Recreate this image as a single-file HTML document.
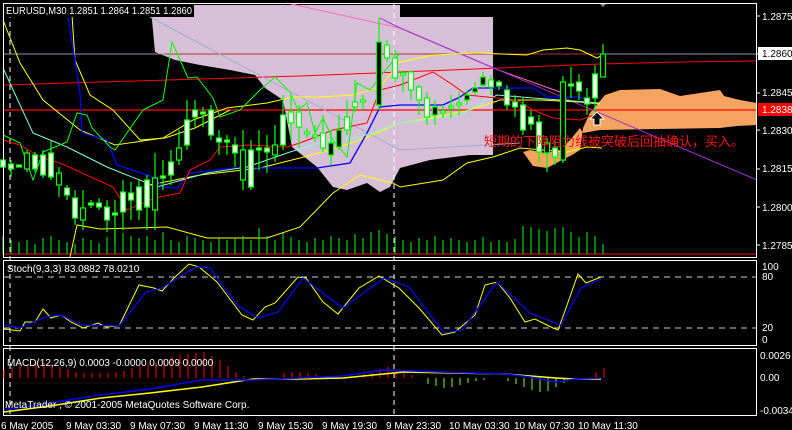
<!DOCTYPE html>
<html><head><meta charset="utf-8"><style>
html,body{margin:0;padding:0;background:#000;width:792px;height:430px;overflow:hidden}
svg{display:block}
text{font-family:"Liberation Sans","Noto Sans CJK SC",sans-serif;font-size:10px;fill:#fff}
</style></head><body>
<svg width="792" height="430" viewBox="0 0 792 430" xmlns="http://www.w3.org/2000/svg">
<rect width="792" height="430" fill="#000"/>
<polygon fill="#d8bfd8" points="150,5 400,5 400,17 493,17 493,155 470,155 430,160 400,168 390,187 380,192 367,183 347,190 333,187 317,167 292,147 283,100 265,88 255,75 230,70 200,65 175,60 155,52 152,20"/>
<polygon fill="#f4a460" points="523,152 533,166 547,168 560,161 572,155 580,150 583,128 590,113 605,95 620,90 660,89 680,96 700,93 720,90 724,96 740,100 757,103 757,125 737,126 720,128 600,130 583,133 580,128 570,140 560,150 545,153 530,150"/>
<line x1="3" y1="54" x2="757" y2="54" stroke="#8898a8" stroke-width="1"/>
<line x1="165" y1="54" x2="600" y2="54" stroke="#b03030" stroke-width="1"/>
<line x1="3" y1="110" x2="757" y2="110" stroke="#ff0000" stroke-width="1.3"/>
<polyline fill="none" stroke="#ff0000" points="3,85 100,82 200,79 300,76 400,72 500,68 600,64 680,62 757,61"/>
<line x1="3" y1="254" x2="757" y2="254" stroke="#ff0000"/>
<line x1="10" y1="4" x2="10" y2="415" stroke="#fff" stroke-dasharray="5,4"/>
<line x1="394" y1="4" x2="394" y2="415" stroke="#fff" stroke-dasharray="5,4"/>
<polyline fill="none" stroke="#9ab0c8" points="150,17 400,150 520,143"/>
<polyline fill="none" stroke="#ff69b4" points="287,3 400,28 493,68 560,92"/>
<polyline fill="none" stroke="#9b30d0" points="380,18 400,28 757,180"/>
<polyline fill="none" stroke="#ffff00" points="3,20 20,63 43,100 80,130 115,145 163,138 193,120 227,108 267,103 293,97 320,97 353,95 380,87 400,62 433,55 477,53 527,55 543,50 567,48 580,50 597,58 602,55"/>
<polyline fill="none" stroke="#ffff00" points="72,15 75,60 90,95 113,110 140,140 165,138 195,128 230,110"/>
<polyline fill="none" stroke="#ffff00" points="70,257 77,225 100,229 167,227 207,238 267,238 300,227 333,193 360,175 393,183 400,187 443,180 467,163 493,157 520,148 567,152 587,147 602,148"/>
<polyline fill="none" stroke="#ffff00" points="150,185 200,175 260,168 300,158 330,150 360,140 400,123 430,118 470,110 500,100 540,100 580,102 600,104"/>
<polyline fill="none" stroke="#0000ff" stroke-width="1.3" points="67,10 80,93 82,133 107,140 117,165 153,177 163,187 177,188 190,173 233,168 317,168 350,163 367,133 380,107 400,105 443,105 460,97 473,88 533,88 547,97 580,97 590,100"/>
<polyline fill="none" stroke="#7fffd4" points="3,68 33,133 67,147 107,167 157,187 207,173 247,167 290,152 320,143 360,137 400,123 460,115 497,95 533,98 600,103"/>
<polyline fill="none" stroke="#ff0000" points="3,140 20,145 40,157 60,163 113,187 127,210 150,200 160,197 180,193 190,170 210,160 220,147 250,145 287,147 300,143 333,130 367,123 380,90 400,85 433,72 450,83 467,95 487,97 517,100 533,110 553,118 580,120 600,113"/>
<polyline fill="none" stroke="#00ff00" points="3,135 20,143 33,180 43,152 67,142 77,113 87,115 92,128 110,147 115,150 143,110 163,100 172,42 180,60 188,78 197,77 213,98 220,117 240,110 260,90 275,77 290,92 298,110 307,103 315,133 323,118 333,140 347,157 357,83 370,90 383,73 400,53"/>
<g stroke="#00ff00">
<path d="M3 254V236M11 254V240M19 254V242M27 254V240M35 254V244M43 254V238M51 254V236M59 254V240M67 254V242M75 254V244M83 254V238M91 254V240M99 254V243M107 254V237M115 254V234M123 254V233M131 254V236M139 254V238M147 254V236M155 254V240M163 254V232M171 254V240M179 254V242M187 254V236M195 254V238M203 254V240M211 254V242M219 254V237M227 254V240M235 254V238M243 254V236M251 254V240M259 254V228M267 254V236M275 254V240M283 254V233M291 254V237M299 254V240M307 254V242M315 254V238M323 254V240M331 254V236M339 254V238M347 254V240M355 254V234M363 254V238M371 254V232M379 254V230M387 254V234M395 254V236M403 254V240M411 254V242M419 254V238M427 254V240M435 254V236M443 254V240M451 254V238M459 254V240M467 254V242M475 254V240M483 254V237M491 254V242M499 254V240M507 254V242M515 254V239M523 254V226M531 254V227M539 254V229M547 254V231M555 254V228M563 254V227M571 254V232M579 254V237M587 254V232M595 254V236M603 254V244"/>
</g>
<g stroke="#00ff00" stroke-width="1.2">
<path d="M11 160V177M27 150V172M35 152V172M43 150V178M51 141V180M59 167V197M67 185V200M75 190V225M83 190V230M91 200V208M99 198V210M107 200V232M115 200V245M123 180V230M131 182V220M139 180V220M147 175V230M155 153V230M163 160V190M171 150V185M179 130V165M187 100V150M195 100V127M203 107V127M211 105V140M219 130V155M227 135V155M235 137V167M243 130V190M251 140V190M259 130V170M267 135V173M275 125V162M283 95V150M291 95V140M299 105V148M307 128V138M315 125V142M323 115V152M331 130V165M339 115V150M347 100V135M355 80V112M363 95V110M379 18V110M387 40V62M395 50V82M403 70V92M411 70V100M419 85V115M427 92V125M435 100V125M443 105V118M451 95V118M459 92V115M467 90V105M475 82V95M483 72V88M491 75V95M499 80V90M507 85V110M515 95V117M523 98V135M531 110V130M539 115V163M547 138V172M555 140V165M563 76V163M571 67V98M579 74V100M587 88V115M595 65V115M603 44V77"/>
</g>
<g stroke="#00ff00" stroke-width="1.2">
<rect x="0.5" y="160" width="5" height="7" fill="#fff"/>
<rect x="8.5" y="164" width="5" height="5" fill="#fff"/>
<rect x="16.5" y="165" width="5" height="2" fill="#fff"/>
<rect x="24.5" y="153" width="5" height="16" fill="#000"/>
<rect x="32.5" y="155" width="5" height="14" fill="#fff"/>
<rect x="40.5" y="155" width="5" height="20" fill="#fff"/>
<rect x="48.5" y="153" width="5" height="24" fill="#fff"/>
<rect x="56.5" y="173" width="5" height="12" fill="#000"/>
<rect x="64.5" y="188" width="5" height="7" fill="#fff"/>
<rect x="72.5" y="198" width="5" height="20" fill="#fff"/>
<rect x="80.5" y="208" width="5" height="12" fill="#000"/>
<rect x="88.5" y="203" width="5" height="2" fill="#fff"/>
<rect x="96.5" y="203" width="5" height="4" fill="#fff"/>
<rect x="104.5" y="207" width="5" height="13" fill="#fff"/>
<rect x="112.5" y="213" width="5" height="2" fill="#fff"/>
<rect x="120.5" y="192" width="5" height="20" fill="#fff"/>
<rect x="128.5" y="193" width="5" height="7" fill="#fff"/>
<rect x="136.5" y="187" width="5" height="23" fill="#fff"/>
<rect x="144.5" y="180" width="5" height="27" fill="#fff"/>
<rect x="152.5" y="178" width="5" height="32" fill="#000"/>
<rect x="160.5" y="176" width="5" height="2" fill="#fff"/>
<rect x="168.5" y="162" width="5" height="13" fill="#fff"/>
<rect x="176.5" y="148" width="5" height="12" fill="#000"/>
<rect x="184.5" y="120" width="5" height="25" fill="#fff"/>
<rect x="192.5" y="110" width="5" height="7" fill="#fff"/>
<rect x="200.5" y="112" width="5" height="2" fill="#fff"/>
<rect x="208.5" y="110" width="5" height="25" fill="#fff"/>
<rect x="216.5" y="138" width="5" height="4" fill="#fff"/>
<rect x="224.5" y="140" width="5" height="2" fill="#fff"/>
<rect x="232.5" y="145" width="5" height="8" fill="#fff"/>
<rect x="240.5" y="150" width="5" height="30" fill="#000"/>
<rect x="248.5" y="150" width="5" height="37" fill="#fff"/>
<rect x="256.5" y="148" width="5" height="2" fill="#fff"/>
<rect x="264.5" y="148" width="5" height="4" fill="#fff"/>
<rect x="272.5" y="145" width="5" height="10" fill="#000"/>
<rect x="280.5" y="115" width="5" height="30" fill="#fff"/>
<rect x="288.5" y="112" width="5" height="11" fill="#fff"/>
<rect x="296.5" y="112" width="5" height="15" fill="#fff"/>
<rect x="304.5" y="132" width="5" height="2" fill="#fff"/>
<rect x="312.5" y="135" width="5" height="2" fill="#fff"/>
<rect x="320.5" y="133" width="5" height="15" fill="#fff"/>
<rect x="328.5" y="143" width="5" height="12" fill="#000"/>
<rect x="336.5" y="130" width="5" height="17" fill="#000"/>
<rect x="344.5" y="117" width="5" height="13" fill="#fff"/>
<rect x="352.5" y="102" width="5" height="5" fill="#fff"/>
<rect x="360.5" y="100" width="5" height="2" fill="#fff"/>
<rect x="376.5" y="42" width="5" height="63" fill="#000"/>
<rect x="384.5" y="45" width="5" height="13" fill="#fff"/>
<rect x="392.5" y="58" width="5" height="20" fill="#fff"/>
<rect x="400.5" y="73" width="5" height="2" fill="#fff"/>
<rect x="408.5" y="72" width="5" height="18" fill="#fff"/>
<rect x="416.5" y="87" width="5" height="13" fill="#fff"/>
<rect x="424.5" y="98" width="5" height="19" fill="#fff"/>
<rect x="432.5" y="107" width="5" height="8" fill="#000"/>
<rect x="440.5" y="111" width="5" height="2" fill="#fff"/>
<rect x="448.5" y="106" width="5" height="2" fill="#fff"/>
<rect x="456.5" y="103" width="5" height="2" fill="#fff"/>
<rect x="464.5" y="95" width="5" height="5" fill="#000"/>
<rect x="472.5" y="88" width="5" height="4" fill="#000"/>
<rect x="480.5" y="77" width="5" height="8" fill="#000"/>
<rect x="488.5" y="80" width="5" height="7" fill="#fff"/>
<rect x="496.5" y="82" width="5" height="4" fill="#fff"/>
<rect x="504.5" y="90" width="5" height="15" fill="#fff"/>
<rect x="512.5" y="102" width="5" height="5" fill="#fff"/>
<rect x="520.5" y="105" width="5" height="25" fill="#fff"/>
<rect x="528.5" y="117" width="5" height="7" fill="#fff"/>
<rect x="536.5" y="122" width="5" height="30" fill="#fff"/>
<rect x="544.5" y="143" width="5" height="10" fill="#000"/>
<rect x="552.5" y="148" width="5" height="9" fill="#fff"/>
<rect x="560.5" y="82" width="5" height="78" fill="#000"/>
<rect x="568.5" y="84" width="5" height="2" fill="#fff"/>
<rect x="576.5" y="82" width="5" height="9" fill="#fff"/>
<rect x="584.5" y="98" width="5" height="6" fill="#fff"/>
<rect x="592.5" y="74" width="5" height="24" fill="#fff"/>
<rect x="600.5" y="54" width="5" height="23" fill="#000"/>
</g>
<path d="M597 112 L590 119 L594 119 L594 125 L600 125 L600 119 L604 119 Z" fill="#000" stroke="#fff" stroke-width="1"/>
<text x="484" y="146" style="font-size:13px;fill:#ff1010">短期的下降阻力线被突破后回抽确认，买入。</text>
<polygon points="599,3 607,3 603,7" fill="#8090a0"/>
<rect x="4" y="4" width="190" height="13" fill="#000"/>
<text x="6" y="14" textLength="186" lengthAdjust="spacingAndGlyphs" style="font-size:10.5px">EURUSD,M30  1.2851 1.2864 1.2851 1.2860</text>
<rect x="3.5" y="3.5" width="753" height="254" fill="none" stroke="#fff"/>
<rect x="3.5" y="260.5" width="753" height="85" fill="none" stroke="#fff"/>
<rect x="3.5" y="348.5" width="753" height="67" fill="none" stroke="#fff"/>
<g>
<text x="762" y="20">1.2875</text>
<text x="762" y="96">1.2845</text>
<text x="762" y="134">1.2830</text>
<text x="762" y="172">1.2815</text>
<text x="762" y="211">1.2800</text>
<text x="762" y="249">1.2785</text>
<rect x="758" y="47" width="34" height="13" fill="#fff"/>
<text x="762" y="57" style="fill:#000">1.2860</text>
<rect x="758" y="103" width="34" height="13" fill="#ff0000"/>
<text x="762" y="113">1.2838</text>
<path d="M757 16h3M757 54h3M757 93h3M757 130h3M757 169h3M757 207h3M757 245h3" stroke="#fff"/>
</g>
<line x1="4" y1="277" x2="756" y2="277" stroke="#ccc" stroke-dasharray="6,5"/>
<line x1="4" y1="328" x2="756" y2="328" stroke="#ccc" stroke-dasharray="6,5"/>
<text x="7" y="272">Stoch(9,3,3) 83.0882 78.0210</text>
<polyline fill="none" stroke="#ffff00" points="4,329 20,331 25,322 35,322 43,309 51,318 61,315 71,322 83,328 98,323 106,327 119,326 139,285 154,288 162,291 174,278 189,264 199,267 217,282 242,315 253,320 265,307 275,303 298,277 306,278 323,302 338,314 359,288 379,276 399,288 419,308 442,335 455,332 475,315 485,285 497,282 510,298 525,322 535,319 553,328 558,330 566,308 578,274 586,283 601,277"/>
<polyline fill="none" stroke="#0000ff" stroke-width="1.2" points="4,325 20,328 45,317 61,315 81,325 119,326 146,292 162,288 182,275 197,267 210,268 237,305 258,318 278,312 303,278 343,308 384,278 409,287 444,333 462,330 497,282 530,313 561,325 581,288 601,279"/>
<text x="762" y="270">100</text>
<text x="762" y="280">80</text>
<text x="762" y="331">20</text>
<text x="762" y="343">0</text>
<g stroke="#ff0000">
<path d="M4 378V370M12 378V367M20 378V366M28 378V365M36 378V363M44 378V363M52 378V364M60 378V367M68 378V369M76 378V372M84 378V373M92 378V373M100 378V373M108 378V373M116 378V372M124 378V371M132 378V368M140 378V366M148 378V364M156 378V363M164 378V359M172 378V357M180 378V355M188 378V354M196 378V353M204 378V352M212 378V356M220 378V360M228 378V366M236 378V372M244 378V376M284 378V373M292 378V372M300 378V372M308 378V373M316 378V374M356 378V376M364 378V374M372 378V373M380 378V369M388 378V367M396 378V370M404 378V372M412 378V375M596 378V372M604 378V368"/>
</g>
<g stroke="#7fff00">
<path d="M428 378V384M436 378V386M444 378V388M452 378V387M460 378V385M468 378V383M476 378V381M484 378V380M508 378V381M516 378V384M524 378V387M532 378V390M540 378V392M548 378V391M556 378V387M564 378V383"/>
</g>
<polyline fill="none" stroke="#ffff00" stroke-width="1.5" points="4,412 50,406 101,398 150,393 202,387 253,379 300,379 343,378 404,372 455,373 505,374 556,378 575,379 601,379"/>
<polyline fill="none" stroke="#0000ff" stroke-width="1.5" points="4,410 50,403 101,395 150,389 202,380 253,380 300,378 343,376 384,370 440,372 505,374 530,377 556,382 575,379 601,378"/>
<text x="7" y="366">MACD(12,26,9) 0.0003 -0.0000 0.0009 0.0000</text>
<text x="5" y="408">MetaTrader , © 2001-2005 MetaQuotes Software Corp.</text>
<text x="760" y="359">0.0026</text>
<text x="760" y="381">0.00</text>
<text x="760" y="414">-0.0034</text>
<g style="font-size:9.6px">
<text x="1" y="429">6 May 2005</text>
<text x="66" y="429">9 May 03:30</text>
<text x="130" y="429">9 May 07:30</text>
<text x="194" y="429">9 May 11:30</text>
<text x="258" y="429">9 May 15:30</text>
<text x="322" y="429">9 May 19:30</text>
<text x="386" y="429">9 May 23:30</text>
<text x="449" y="429">10 May 03:30</text>
<text x="514" y="429">10 May 07:30</text>
<text x="578" y="429">10 May 11:30</text>
</g>
</svg>
</body></html>
